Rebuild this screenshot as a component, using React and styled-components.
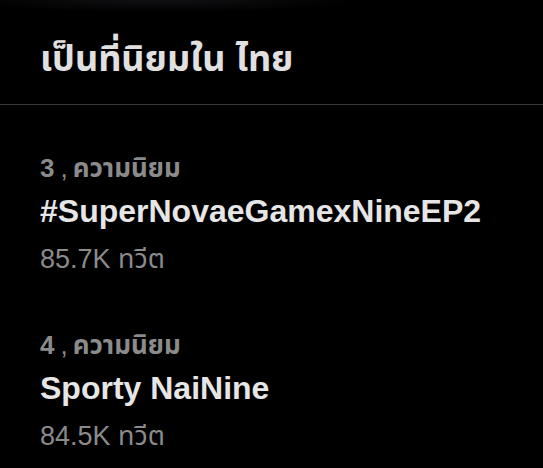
import React from 'react';
import styled, { createGlobalStyle } from 'styled-components';

const GlobalStyle = createGlobalStyle`
  html, body {
    margin: 0;
    padding: 0;
    background: #000;
  }
  body {
    font-family: "Liberation Sans", "Noto Sans Thai", "Noto Sans", sans-serif;
    -webkit-font-smoothing: antialiased;
  }
`;

const Page = styled.div`
  width: 543px;
  height: 468px;
  background: #000;
  overflow: hidden;
`;

const Header = styled.div`
  height: 90px;
  padding: 14px 40px 0;
  display: flex;
  align-items: center;
  border-bottom: 1px solid #3a3a3c;
  background: radial-gradient(ellipse 200px 12px at 160px 0, #111114, #000);
`;

const Heading = styled.h1`
  margin: 0;
  font-size: 36px;
  font-weight: 700;
  color: #e0e0e0;
  line-height: 1;
`;

const List = styled.div`
  display: flex;
  flex-direction: column;
  padding: 44px 40px 0;
  gap: 43px;
`;

const Trend = styled.div`
  display: flex;
  flex-direction: column;
`;

const Rank = styled.div`
  font-size: 26px;
  font-weight: 700;
  color: #8b8b8b;
  line-height: 38px;
  height: 38px;
`;

const Comma = styled.span`
  font-weight: 400;
  margin: 0 5px 0 6px;
`;

const Title = styled.div`
  font-size: 32px;
  font-weight: 700;
  color: #e6e6e6;
  line-height: 48px;
  height: 48px;
`;

const Count = styled.div`
  font-size: 27px;
  font-weight: 400;
  color: #8b8b8b;
  line-height: 48px;
  height: 48px;
`;

const trends = [
  { rank: 3, title: '#SuperNovaeGamexNineEP2', count: '85.7K' },
  { rank: 4, title: 'Sporty NaiNine', count: '84.5K' },
];

const App = () => (
  <Page>
    <GlobalStyle />
    <Header>
      <Heading>เป็นที่นิยมใน ไทย</Heading>
    </Header>
    <List>
      {trends.map(trend => (
        <Trend key={trend.rank}>
          <Rank>
            {trend.rank}
            <Comma>,</Comma>
            ความนิยม
          </Rank>
          <Title>{trend.title}</Title>
          <Count>{trend.count} ทวีต</Count>
        </Trend>
      ))}
    </List>
  </Page>
);

export default App;
